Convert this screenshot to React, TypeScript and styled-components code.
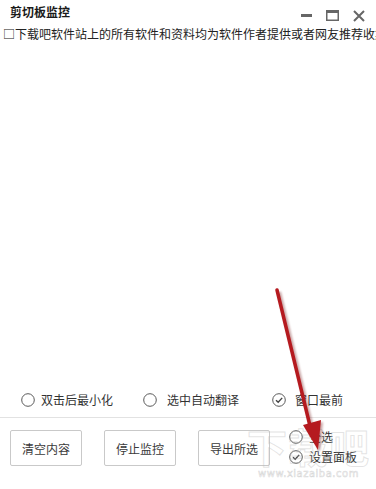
import React from "react";
import styled, { createGlobalStyle } from "styled-components";

const GlobalStyle = createGlobalStyle`
  html, body {
    margin: 0;
    padding: 0;
    background: #fff;
  }
  body {
    font-family: "Noto Sans CJK SC", "Microsoft YaHei", sans-serif;
    color: #333;
  }
`;

const Window = styled.div`
  position: relative;
  width: 376px;
  height: 489px;
  display: flex;
  flex-direction: column;
  background: #fff;
  overflow: hidden;
`;

const TitleBar = styled.div`
  height: 26px;
  flex: none;
  display: flex;
  align-items: center;
  padding-left: 10px;
  box-sizing: border-box;
`;

const Title = styled.div`
  font-size: 12px;
  font-weight: 700;
  color: #1a1a1a;
  line-height: 14px;
  margin-top: -2px;
  flex: 1;
`;

const Controls = styled.div`
  display: flex;
  align-items: center;
  gap: 14px;
  padding-right: 11px;
  margin-top: 5px;
  svg {
    display: block;
  }
`;

const List = styled.div`
  flex: 1;
  min-height: 0;
  padding-left: 3px;
  white-space: nowrap;
  overflow: hidden;
`;

const ListItem = styled.div`
  font-size: 12px;
  line-height: 16px;
  color: #222;
`;

const Options = styled.div`
  height: 34px;
  flex: none;
  display: grid;
  grid-template-columns: 122px 129px auto;
  align-items: center;
  padding-left: 21px;
  border-bottom: 1px solid #e2e2e2;
  box-sizing: border-box;
  padding-bottom: 1px;
`;

const Option = styled.label<{ $gap?: number }>`
  display: flex;
  align-items: center;
  gap: ${(p) => p.$gap ?? 6}px;
  font-size: 12px;
  line-height: 14px;
  color: #333;
  svg {
    flex: none;
  }
`;

const Bottom = styled.div`
  height: 71px;
  flex: none;
  display: flex;
  align-items: flex-start;
  padding: 12px 0 0 10px;
  box-sizing: border-box;
`;

const Buttons = styled.div`
  display: flex;
  gap: 22px;
`;

const Button = styled.button`
  width: 72px;
  height: 36px;
  border: 1px solid #c9c9c9;
  border-radius: 2px;
  background: #fff;
  font-family: inherit;
  font-size: 12px;
  color: #3a3a3a;
  padding: 0;
`;

const SideOptions = styled.div`
  display: flex;
  flex-direction: column;
  gap: 6px;
  margin: 0 0 0 19px;
`;

const Overlay = styled.svg`
  position: absolute;
  left: 0;
  top: 0;
  pointer-events: none;
`;

// faint site watermark in the bottom-right corner
const Watermark = styled.div`
  position: absolute;
  right: 6px;
  top: 424px;
  pointer-events: none;
  display: flex;
  flex-direction: column;
  align-items: center;
`;

const WatermarkBig = styled.div`
  font-size: 40px;
  font-weight: 700;
  line-height: 44px;
  color: transparent;
  -webkit-text-stroke: 1px rgba(185, 185, 185, 0.4);
  letter-spacing: 1px;
`;

const WatermarkSmall = styled.div`
  font-family: "DejaVu Sans", sans-serif;
  font-size: 10px;
  line-height: 12px;
  color: transparent;
  -webkit-text-stroke: 0.6px rgba(170, 170, 170, 0.45);
  letter-spacing: 0.5px;
`;

const Radio = ({ checked }: { checked?: boolean }) => (
  <svg width="14" height="14" viewBox="0 0 14 14">
    <circle cx="7" cy="7" r="6.3" fill="#fff" stroke="#5a5a5a" strokeWidth="1" />
    {checked && (
      <path d="M4 7.2 L6.2 9.3 L10.2 4.9" fill="none" stroke="#444" strokeWidth="1.4" />
    )}
  </svg>
);

export default function App() {
  return (
    <>
      <GlobalStyle />
      <Window>
        <TitleBar>
          <Title>剪切板监控</Title>
          <Controls>
            <svg width="11" height="11" viewBox="0 0 11 11">
              <rect x="0" y="4" width="11" height="3" fill="#666" />
            </svg>
            <svg width="13" height="11" viewBox="0 0 13 11">
              <rect x="0.75" y="0.75" width="11.5" height="9.5" fill="none" stroke="#666" strokeWidth="1.5" />
              <rect x="0" y="0" width="13" height="3" fill="#666" />
            </svg>
            <svg width="12" height="12" viewBox="0 0 12 12">
              <path d="M1 1 L11 11 M11 1 L1 11" stroke="#666" strokeWidth="2" />
            </svg>
          </Controls>
        </TitleBar>
        <List>
          <ListItem>□下载吧软件站上的所有软件和资料均为软件作者提供或者网友推荐收集整理而来</ListItem>
        </List>
        <Options>
          <Option>
            <Radio />
            双击后最小化
          </Option>
          <Option $gap={10}>
            <Radio />
            选中自动翻译
          </Option>
          <Option $gap={9}>
            <Radio checked />
            窗口最前
          </Option>
        </Options>
        <Bottom>
          <Buttons>
            <Button>清空内容</Button>
            <Button>停止监控</Button>
            <Button>导出所选</Button>
          </Buttons>
          <SideOptions>
            <Option>
              <Radio />
              全选
            </Option>
            <Option>
              <Radio checked />
              设置面板
            </Option>
          </SideOptions>
        </Bottom>
        <Watermark>
          <WatermarkBig>下载吧</WatermarkBig>
          <WatermarkSmall>www.xiazaiba.com</WatermarkSmall>
        </Watermark>
        <Overlay width="376" height="489" viewBox="0 0 376 489">
          <defs>
            <filter id="sh" x="-20%" y="-20%" width="140%" height="140%">
              <feGaussianBlur stdDeviation="1.2" />
            </filter>
          </defs>
          <g opacity="0.35" filter="url(#sh)">
            <line x1="279" y1="292" x2="313" y2="432" stroke="#600" strokeWidth="4" />
            <path d="M305 426 L323 422 L320 452 Z" fill="#600" />
          </g>
          <line x1="277" y1="290" x2="311" y2="430" stroke="#b51a1f" strokeWidth="3.5" strokeLinecap="round" />
          <path d="M303 425 L321 420 L318 450 Z" fill="#b51a1f" />
        </Overlay>
      </Window>
    </>
  );
}
